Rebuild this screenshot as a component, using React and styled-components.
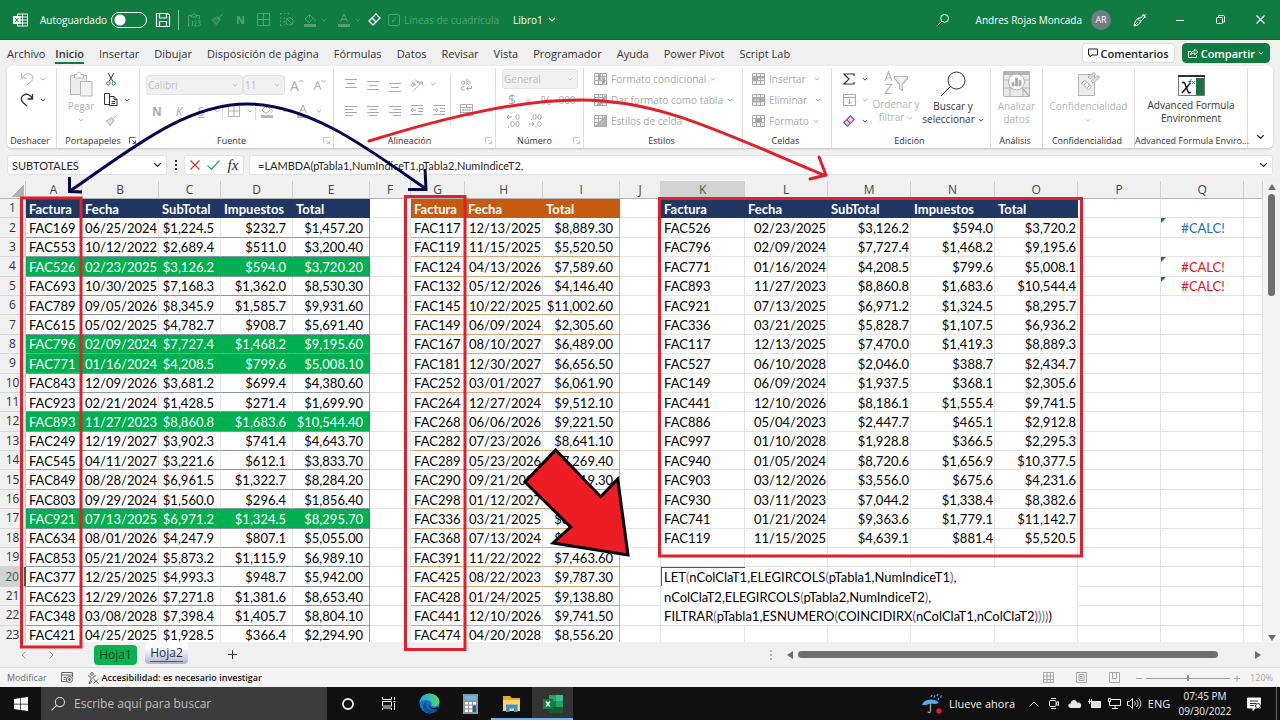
import React from "react";
import styled, { createGlobalStyle } from "styled-components";

const UI = '"Open Sans", "Noto Sans", sans-serif';
const CELL = 'Lato, "Open Sans", sans-serif';

const Global = createGlobalStyle`
  * { box-sizing: border-box; }
  html, body { margin: 0; padding: 0; }
  body { font-family: ${UI}; font-size: 11px; color: #262626; background: #f0f0f0; overflow: hidden; }
  button, input, select { font: inherit; color: inherit; margin: 0; padding: 0; border: 0; background: none; outline: none; }
  button { cursor: pointer; }
`;

/* ---------- icons ---------- */

const Svg = styled.svg`
  display: block;
  flex: none;
  overflow: visible;
`;

function Icon({ w = 16, h = w, box, children, ...rest }) {
  return (
    <Svg
      width={w}
      height={h}
      viewBox={box || `0 0 ${w} ${h}`}
      fill="none"
      stroke="currentColor"
      strokeWidth="1"
      aria-hidden="true"
      {...rest}
    >
      {children}
    </Svg>
  );
}

const Chevron = ({ w = 6 }) => (
  <Icon w={w} h={w / 2 + 1} box="0 0 8 5">
    <path d="M1 1l3 3 3-3" strokeWidth="1.2" />
  </Icon>
);

const Undo = () => (
  <Icon w={14} h={14}>
    <path d="M1.500 1v5h5M1.500 6C5 1.500 9 .5 11.500 3s1.500 5-.5 6.500L7 13" />
  </Icon>
);
const Redo = () => (
  <Icon w={14} h={14}>
    <path d="M12.500 1v5h-5M12.500 6C11 1.500 6 0 3 2.500S1.500 8 3 9.500L7 13" strokeWidth="1.3" />
  </Icon>
);
const Paste = () => (
  <Icon w={24} h={26}>
    <path d="M1.500 4.500h16v19h-16z" fill="#ececec" />
    <path d="M5.500 7V3.500h2.500C8 .5 12 .5 12 3.500h2.500V7z" fill="#fff" />
    <path d="M11.500 10.500h11.500v14.500H11.500z" fill="#f3f3f3" />
  </Icon>
);
const Scissors = () => (
  <Icon w={10} h={14}>
    <path d="M2 1l5 8.500M8 1L3 9.500" />
    <circle cx="2.300" cy="11.300" r="1.700" stroke="#2b88c8" />
    <circle cx="7.700" cy="11.300" r="1.700" stroke="#2b88c8" />
  </Icon>
);
const Copy = () => (
  <Icon w={14} h={13}>
    <path d="M.5.5h5v11h-5zM5.500 3.500h4.500l3 3v6h-7.500zM10 3.500v3h3M7.500 8.500h3.500M7.500 10.500h3.500" fill="#fff" />
  </Icon>
);
const Brush = ({ w = 14 }) => (
  <Icon w={w} box="0 0 14 14">
    <path d="M13 1L9 4.500M7 3.500l3.500 3.500M6 4.500L1 8c1.500.5 2 1 2.500 1.500l2 3 4-5z" fill="currentColor" fillOpacity=".35" />
  </Icon>
);
const Borders = ({ w = 13 }) => (
  <Icon w={w} box="0 0 13 13">
    <path d="M.5.500h12v12H.5zM6.500.5v12M.5 6.500h12" />
  </Icon>
);
const Bucket = ({ bar }) => (
  <Icon w={14} h={14}>
    <path d="M6.500 1.500L2 6l4 3.500 4.500-4zM6.500 1.500v3M11.500 5.500c1 1.500 1 3 0 3" />
    <path d="M1 11h12v3H1z" fill={bar} stroke="none" />
  </Icon>
);
const LetterA = ({ bar }) => (
  <Icon w={14} h={14}>
    <path d="M3.500 9L7 1l3.500 8M4.800 6.200h4.400" />
    <path d="M1 11h12v3H1z" fill={bar} stroke="none" />
  </Icon>
);
const Eraser = ({ w = 13, fill = "none", color = "currentColor" }) => (
  <Icon w={w} box="0 0 13 13" strokeWidth="1.300" stroke={color}>
    <path d="M8 1l4 4-7 7-4-4z" fill={fill} />
    <path d="M4 5l4 4" />
  </Icon>
);
const Align = ({ lines, step = 3, top = 1 }) => (
  <Icon w={12} h={11}>
    {lines.map(([x, len], i) => (
      <path key={i} d={`M${x} ${i * step + top + 0.5}h${len}`} />
    ))}
  </Icon>
);
const Indent = ({ right }) => (
  <Icon w={12} h={11}>
    <path d="M0 .5h12M7 3.500h5M7 6.500h5M0 9.500h12" />
    <path d={right ? "M0 5h5M3 3l2 2-2 2" : "M5 5H0M2 3L0 5l2 2"} />
  </Icon>
);
const Sigma = () => (
  <Icon w={12} h={12}>
    <path d="M11 3V1H1l5 5-5 5h10V9" strokeWidth="1.200" />
  </Icon>
);
const FillDown = () => (
  <Icon w={13} h={12}>
    <path d="M.5.500h12v11H.5zM.5 3.500h12M6.500 5v5M4.500 8l2 2 2-2" />
  </Icon>
);
const SortFilter = () => (
  <Icon w={24} h={24}>
    <path d="M1 10L4.500 1 8 10M2.200 7h4.600M1.500 13.500h6L1 22.500h7" strokeWidth="1.200" />
    <path d="M10.500 5.500h13v2l-5 5.500v6.500l-3-2V13l-5-5.500z" fill="#f0f0f0" strokeWidth="1.200" />
  </Icon>
);
const Lens = ({ w = 26, flat }) => (
  <Icon w={w} box="0 0 26 26" strokeWidth={flat ? 2 : 1}>
    <circle cx="16.500" cy="9.500" r="8.500" fill={flat ? "none" : "#fbfbfb"} />
    <path d="M10.500 15.500L1 25" />
  </Icon>
);
const Analyze = () => (
  <Icon w={27} h={26}>
    <path d="M.500.500h26v25H.500z" fill="#e9e9e9" />
    <path d="M.5 2.500h26" strokeWidth="3" />
    <path d="M.500 9h26M.500 17h26M7 4v22M20 18v8" />
    <circle cx="13.500" cy="11" r="8" fill="#fff" />
    <path d="M9 11.500h2V15H9zM12.500 7h2v8h-2zM16 9.500h2V15h-2z" fill="#a8a8a8" />
    <path d="M19.500 17l6.500 8" strokeWidth="1.500" />
  </Icon>
);
const Sensitivity = () => (
  <Icon w={24} h={26}>
    <path d="M1.500 3.500h16v21h-16z" fill="#ececec" />
    <path d="M4.500 12l3-3 7 7-3 3zM8 9l-3.500 3.500M10 11l-3 3M13 14l-3 3" fill="#fff" />
    <path d="M11 6l5-4c2-1 3 1 2 2l-5 4zM14 10l6-5c2-1 3 1 2 2l-6 5z" fill="#ddd" />
  </Icon>
);
const Afe = () => (
  <Icon w={27} h={21}>
    <path d="M.500.500h26v20H.500z" fill="#fff" stroke="#777" />
    <path d="M0 1h27" stroke="#3a2a33" strokeWidth="2" />
    <path d="M18 3h8v17h-8z" fill="#1e7145" stroke="none" />
    <path d="M4 8c3-2 3 1 4.500 5s2 6 4.500 4M12.500 8L4 18" stroke="#111" strokeWidth="1.500" />
    <path d="M10.500 10c2 0 1-6 3-6M10.500 6.500h3M14 6l3 3M17 6l-3 3" stroke="#1e7145" />
  </Icon>
);
const TableIcon = ({ kind }) => (
  <Icon w={13} h={12}>
    <path d="M.5.500h12v11H.5z" fill="#f0f0f0" />
    <path d="M.5 3.500h12M.5 7.500h12M4.500.5v11M8.500.5v11" />
    {kind === "cond" && <path d="M4.500 1.500h2v6h-2zM8.500 5h2v5h-2z" fill="#a0a0a0" />}
    {kind === "table" && <path d="M12 2L6 10l-3 1" strokeWidth="2.500" />}
    {kind === "style" && <path d="M2 11L12 1v10z" fill="#b8b8b8" strokeWidth="1.300" />}
    {kind === "insert" && <path d="M5 4.500h7M1 6h5M3 4L1 6l2 2" strokeWidth="2" />}
    {kind === "delete" && <path d="M1 4.500h7v3H1zM9 4l4 4M13 4L9 8" strokeWidth="1.800" />}
    {kind === "format" && <path d="M3.500 3.500h6v4h-6z" fill="#a0a0a0" />}
  </Icon>
);
const Wrap = () => (
  <Icon w={12} h={13}>
    <path d="M4.500 3v3.500M4.500 4.700a1.600 1.700 0 1 0 0 .2M7 .5v6M7 4.700a1.600 1.700 0 1 0 0-.2M4.500 9c-2-1-4 .5-3.500 2s2.500 1.500 3.500.5M11.500 8v2.500H6.500M8.500 8.500l-2 2 2 2" />
  </Icon>
);
const Merge = () => (
  <Icon w={13} h={12}>
    <path d="M.5.500h12v11H.5zM.5 3.500h12M.5 8.500h12M6.500.5v3M6.500 8.500v3M2.500 6h8M4 4.800L2.500 6 4 7.200M9 4.800L10.500 6 9 7.200" />
  </Icon>
);
const Orient = () => (
  <Icon w={14} h={13}>
    <path d="M2 5.500c2-2 4 0 2 2s-4 0-2-2l4 2M5 1.500l4.500 4.500M7 4c2-1.500 3.500.5 2 2M3.500 12.500l9-8.500M9.500 4h3v3" />
  </Icon>
);
const Launcher = () => (
  <Icon w={7} h={7}>
    <path d="M.5 6.500v-6h6M3 3l3.500 3.500M6.500 3.500v3h-3" strokeWidth=".9" />
  </Icon>
);

/* ---------- shell ---------- */

const Page = styled.div`
  position: relative;
  display: flex;
  flex-direction: column;
  height: 100vh;
  min-width: 1200px;
`;

const Row = styled.div`
  display: flex;
  align-items: center;
  gap: ${(p) => p.$gap || 0}px;
`;

const TitleBar = styled.header`
  display: flex;
  align-items: center;
  flex: none;
  height: 40px;
  padding-left: 13px;
  background: #107c41;
  border-bottom: 1px solid #0b6a36;
  color: #fff;
  font-size: 10px;
`;

const AutoSave = styled.label`
  display: flex;
  align-items: center;
  gap: 4px;
  margin: 0 9px 0 12px;
`;

const Toggle = styled.input.attrs({ type: "checkbox" })`
  appearance: none;
  width: 36px;
  height: 16px;
  border: 1px solid #fff;
  border-radius: 8px;
  background: radial-gradient(circle at 8px 7px, #fff 5px, transparent 6px);
`;

const TitleDivider = styled.span`
  width: 1px;
  height: 20px;
  margin: 0 4px 0 8px;
  background: #8cc3a3;
`;

const TitleButton = styled.button`
  display: flex;
  align-items: center;
  justify-content: center;
  gap: ${(p) => p.$gap || 0}px;
  width: ${(p) => p.$w || 23}px;
  height: 24px;
  color: ${(p) => (p.disabled ? "#4fa477" : "#fff")};
  font-size: 11px;
  font-weight: ${(p) => (p.$bold ? 700 : 400)};
`;

const GridLinesToggle = styled.label`
  display: flex;
  align-items: center;
  gap: 4px;
  margin: 0 14px 0 4px;
  color: #4fa477;
`;

const TickBox = styled.input.attrs({ type: "checkbox" })`
  appearance: none;
  display: grid;
  place-items: center;
  width: 12px;
  height: 12px;
  border: 1px solid #4fa477;
  border-radius: 2px;

  &:checked::before {
    content: "✓";
    font-family: "DejaVu Sans", sans-serif;
    font-size: 9px;
    line-height: 10px;
  }
`;

const TitleRight = styled.div`
  display: flex;
  align-items: center;
  margin-left: auto;
`;

const Avatar = styled.span`
  display: grid;
  place-items: center;
  width: 20px;
  height: 20px;
  margin: 0 9px;
  border-radius: 50%;
  background: #6f7d86;
  font-size: 9px;
`;

const UserName = styled.span`
  margin-left: 21px;
`;

const MenuBar = styled.nav`
  display: flex;
  align-items: center;
  flex: none;
  height: 26px;
  padding: 0 10px 0 7px;
  gap: 15px;
  font-size: 11px;
`;

const MenuTab = styled.a`
  padding-top: 3px;
  line-height: 16px;
  color: #333;
  text-decoration: none;
  white-space: nowrap;
  border-bottom: 2px solid ${(p) => (p.$active ? "#107c41" : "transparent")};
  font-weight: ${(p) => (p.$active ? 600 : 400)};

  &:first-child {
    margin-right: -5px;
  }
`;

const PillButton = styled.button`
  display: flex;
  align-items: center;
  gap: 3px;
  height: 20px;
  padding: 0 5px;
  border: 1px solid ${(p) => (p.$primary ? "#107c41" : "#dcdcdc")};
  border-radius: 4px;
  background: ${(p) => (p.$primary ? "#107c41" : "#fff")};
  color: ${(p) => (p.$primary ? "#fff" : "#222")};
  font-size: 11px;
  font-weight: 600;
`;

const Pills = styled.div`
  display: flex;
  gap: 7px;
  margin-left: auto;
`;

/* ---------- ribbon ---------- */

const Ribbon = styled.section`
  display: flex;
  flex: none;
  height: 82px;
  margin: 0 7px;
  border-radius: 5px;
  background: #fff;
  box-shadow: 0 1px 2px rgba(0, 0, 0, 0.2);
`;

const Group = styled.div`
  display: flex;
  flex-direction: column;
  flex: none;
  width: ${(p) => p.$w}px;
  padding-top: 2px;
`;

const GroupMain = styled.div`
  display: flex;
  flex: 1;
  border-right: 1px solid #dedede;
  color: ${(p) => (p.$live ? "#333" : "#aaa")};
  padding-left: ${(p) => p.$pad || 0}px;
  font-size: 10px;
`;

const GroupLabel = styled.div`
  display: flex;
  align-items: center;
  height: 16px;
  padding-right: 3px;
  border-right: 1px solid #dedede;
  font-size: 9px;
  color: #333;
  white-space: nowrap;

  span {
    flex: 1;
    text-align: center;
  }
  svg {
    color: ${(p) => (p.$dim ? "#c4c4c4" : "#555")};
  }
`;

const Stack = styled.div`
  display: flex;
  flex-direction: column;
  padding-top: ${(p) => p.$top || 0}px;
  gap: ${(p) => p.$gap || 0}px;
`;

const ToolRow = styled.div`
  display: flex;
  align-items: center;
  height: ${(p) => p.$h || 21}px;
  color: ${(p) => (p.$dim ? "#aaa" : "inherit")};
`;

const Tool = styled.button`
  display: flex;
  align-items: center;
  justify-content: center;
  width: ${(p) => p.$w || 22}px;
  height: 20px;
  font-size: ${(p) => p.$size || 12}px;
  font-weight: ${(p) => (p.$bold ? 700 : 400)};
  font-style: ${(p) => (p.$italic ? "italic" : "normal")};
  text-decoration: ${(p) => (p.$underline ? "underline" : "none")};
`;

const VLine = styled.span`
  width: 1px;
  height: ${(p) => p.$h || 18}px;
  background: #dedede;
`;

const TextTool = styled.button`
  display: flex;
  align-items: center;
  gap: 4px;
  height: 21px;
  white-space: nowrap;

  svg:last-child {
    margin-left: ${(p) => p.$push || 0}px;
  }
`;

const BigTool = styled.button`
  display: flex;
  flex-direction: column;
  align-items: center;
  width: ${(p) => p.$w}px;
  padding-top: ${(p) => p.$top || 3}px;
  color: ${(p) => (p.$live ? "#333" : "#b4b4b4")};
  font-size: 10px;
  line-height: 13px;
  text-align: center;

  > span {
    display: flex;
    flex-direction: column;
    align-items: center;
    margin-top: 3px;
    white-space: nowrap;
  }
  em {
    display: flex;
    align-items: center;
    gap: 3px;
    height: 13px;
    font-style: normal;
  }
`;

const PickerFrame = styled.label`
  position: relative;
  display: flex;
  align-items: center;
  width: ${(p) => p.$w}px;
  height: 20px;
  border: 1px solid #e2e2e2;
  border-radius: 3px;
  background: #f1f1f1;
  color: #bdbdbd;

  select {
    appearance: none;
    width: 100%;
    padding-left: 1px;
    opacity: 1;
  }
  svg {
    position: absolute;
    right: 4px;
  }
`;

function Picker({ w, value, label }) {
  return (
    <PickerFrame $w={w}>
      <select disabled aria-label={label} defaultValue={value}>
        <option>{value}</option>
      </select>
      <Chevron />
    </PickerFrame>
  );
}

function RibbonGroup({ w, label, live, pad, launcher, dim, children }) {
  return (
    <Group $w={w}>
      <GroupMain $live={live} $pad={pad}>
        {children}
      </GroupMain>
      <GroupLabel $dim={dim}>
        <span>{label}</span>
        {launcher && <Launcher />}
      </GroupLabel>
    </Group>
  );
}

const CollapseButton = styled.button`
  display: flex;
  align-items: flex-end;
  justify-content: center;
  width: 26px;
  padding-bottom: 9px;
`;

/* ---------- formula bar ---------- */

const FormulaBar = styled.section`
  display: flex;
  align-items: center;
  flex: none;
  height: 20px;
  margin: 7px 7px 6px;
  font-family: ${CELL};
  font-size: 11px;
`;

const Field = styled.div`
  display: flex;
  align-items: center;
  flex: ${(p) => (p.$grow ? 1 : "none")};
  width: ${(p) => (p.$w ? `${p.$w}px` : "auto")};
  height: 20px;
  margin-left: ${(p) => (p.$grow ? 5 : 0)}px;
  padding: 0 ${(p) => (p.$tight ? 0 : 4)}px 0 ${(p) => (p.$tight ? 0 : p.$grow ? 8 : 4)}px;
  border: 1px solid #e2e2e2;
  border-radius: 3px;
  background: #fff;

  input {
    flex: 1;
    min-width: 0;
  }
`;

const Dots = styled.span`
  display: flex;
  flex-direction: column;
  align-items: center;
  gap: 2px;
  width: ${(p) => p.$w || 17}px;

  &::before,
  &::after,
  i {
    content: "";
    width: 2px;
    height: 2px;
    background: ${(p) => p.$color || "#333"};
  }
`;

const Fx = styled.button`
  width: 20px;
  font-family: "Liberation Serif", serif;
  font-size: 15px;
  font-style: italic;
`;

/* ---------- grid ---------- */

const SheetArea = styled.main`
  display: flex;
  flex: 1;
  min-height: 0;
  overflow: hidden;
  background: #fff;
`;

/* The last row runs slightly under the sheet tabs. */
const Grid = styled.table`
  flex: 1;
  min-width: 0;
  height: calc(100% + 3px);
  table-layout: fixed;
  border-collapse: separate;
  border-spacing: 0;
  font-family: ${CELL};
  font-size: 13px;
  line-height: 16px;
  color: #000;
`;

const HeadRow = styled.tr`
  height: 18px;
`;

const ColHead = styled.th`
  padding: 0;
  border-right: 1px solid #d0d0d0;
  border-bottom: 1px solid #b4b4b4;
  background: ${(p) => (p.$on ? "#d2d2d2" : "#f0f0f0")};
  color: ${(p) => (p.$on ? "#1e6b41" : "#444")};
  font-family: ${UI};
  font-size: 12px;
  font-weight: 400;
`;

const Corner = styled.th`
  padding: 0;
  border-right: 1px solid #c8c8c8;
  border-bottom: 1px solid #b4b4b4;
  background: linear-gradient(135deg, transparent 50%, #b0b0b0 50%) 11px 4px / 13px 12px no-repeat #f0f0f0;
`;

const RowHead = styled.th`
  padding: 0;
  border-right: ${(p) => (p.$on ? "2px solid #217346" : "1px solid #c8c8c8")};
  border-bottom: 1px solid #d6d6d6;
  background: ${(p) => (p.$on ? "#d2d2d2" : "#f0f0f0")};
  color: ${(p) => (p.$on ? "#1e6b41" : "#333")};
  font-family: ${UI};
  font-size: 12px;
  font-weight: 400;
`;

const lineColor = { blue: "#8596ad", orange: "#d8a679", none: "#e3e3e3" };

const Cell = styled.td`
  position: relative;
  padding: 1px ${(p) => (p.$wide ? 6 : 1)}px 0 3px;
  border-right: 1px solid
    ${(p) => (p.$fill ? p.$fill : p.$edge ? lineColor[p.$line] : "#e3e3e3")};
  border-bottom: 1px solid ${(p) => (p.$fill && !p.$body ? p.$fill : lineColor[p.$line || "none"])};
  background: ${(p) => p.$fill || "#fff"};
  color: ${(p) => p.$color || (p.$fill ? "#fff" : "#000")};
  font-weight: ${(p) => (p.$head ? 700 : 400)};
  text-align: ${(p) => p.$align || "left"};
  white-space: nowrap;
`;

const ErrorFlag = styled.span`
  position: absolute;
  top: 0;
  left: 0;
  border-top: 5px solid #1a7a2e;
  border-right: 5px solid transparent;
`;

const FormulaCell = styled.td`
  padding: 1px 0 0 3px;
  border-right: 1px solid #e3e3e3;
  border-bottom: 1px solid ${(p) => (p.$last ? "#e3e3e3" : "#fff")};
  background: ${(p) =>
    p.$first
      ? `linear-gradient(#217346, #217346) 0 0 / 84px 1px no-repeat,
         linear-gradient(#217346, #217346) 0 0 / 1px 100% no-repeat, #fff`
      : "#fff"};
  white-space: nowrap;
`;

const Paren = styled.span`
  color: ${(p) => p.$c};
`;

const VScroll = styled.div`
  display: flex;
  flex-direction: column;
  align-items: center;
  flex: none;
  width: 17px;
  padding: 3px 0 1px;
  background: #f3f3f3;
`;

const VThumb = styled.div`
  width: 7px;
  height: 102px;
  margin: 2px 0 auto;
  border-radius: 4px;
  background: #6e6e6e;
`;

const Arrow = ({ d }) => (
  <Icon w={8} h={8} stroke="none" fill="#6e6e6e">
    <path d={d} />
  </Icon>
);

const invoices = `FAC169 06/25/2024 $1,224.5 $232.7 $1,457.20
FAC553 10/12/2022 $2,689.4 $511.0 $3,200.40
FAC526 02/23/2025 $3,126.2 $594.0 $3,720.20
FAC693 10/30/2025 $7,168.3 $1,362.0 $8,530.30
FAC789 09/05/2026 $8,345.9 $1,585.7 $9,931.60
FAC615 05/02/2025 $4,782.7 $908.7 $5,691.40
FAC796 02/09/2024 $7,727.4 $1,468.2 $9,195.60
FAC771 01/16/2024 $4,208.5 $799.6 $5,008.10
FAC843 12/09/2026 $3,681.2 $699.4 $4,380.60
FAC923 02/21/2024 $1,428.5 $271.4 $1,699.90
FAC893 11/27/2023 $8,860.8 $1,683.6 $10,544.40
FAC249 12/19/2027 $3,902.3 $741.4 $4,643.70
FAC545 04/11/2027 $3,221.6 $612.1 $3,833.70
FAC849 08/28/2024 $6,961.5 $1,322.7 $8,284.20
FAC803 09/29/2024 $1,560.0 $296.4 $1,856.40
FAC921 07/13/2025 $6,971.2 $1,324.5 $8,295.70
FAC634 08/01/2026 $4,247.9 $807.1 $5,055.00
FAC853 05/21/2024 $5,873.2 $1,115.9 $6,989.10
FAC377 12/25/2025 $4,993.3 $948.7 $5,942.00
FAC623 12/29/2026 $7,271.8 $1,381.6 $8,653.40
FAC348 03/08/2028 $7,398.4 $1,405.7 $8,804.10
FAC421 04/25/2025 $1,928.5 $366.4 $2,294.90`.split("\n").map((r) => r.split(" "));

const payments = `FAC117 12/13/2025 $8,889.30
FAC119 11/15/2025 $5,520.50
FAC124 04/13/2026 $7,589.60
FAC132 05/12/2026 $4,146.40
FAC145 10/22/2025 $11,002.60
FAC149 06/09/2024 $2,305.60
FAC167 08/10/2027 $6,489.00
FAC181 12/30/2027 $6,656.50
FAC252 03/01/2027 $6,061.90
FAC264 12/27/2024 $9,512.10
FAC268 06/06/2026 $9,221.50
FAC282 07/23/2026 $8,641.10
FAC289 05/23/2026 $7,269.40
FAC290 09/21/2025 $8,419.30
FAC298 01/12/2027 $6,318.20
FAC336 03/21/2025 $8,295.70
FAC368 07/13/2024 $5,214.60
FAC391 11/22/2022 $7,463.60
FAC425 08/22/2023 $9,787.30
FAC428 01/24/2025 $9,138.80
FAC441 12/10/2026 $9,741.50
FAC474 04/20/2028 $8,556.20`.split("\n").map((r) => r.split(" "));

const result = `FAC526 02/23/2025 $3,126.2 $594.0 $3,720.2
FAC796 02/09/2024 $7,727.4 $1,468.2 $9,195.6
FAC771 01/16/2024 $4,208.5 $799.6 $5,008.1
FAC893 11/27/2023 $8,860.8 $1,683.6 $10,544.4
FAC921 07/13/2025 $6,971.2 $1,324.5 $8,295.7
FAC336 03/21/2025 $5,828.7 $1,107.5 $6,936.2
FAC117 12/13/2025 $7,470.0 $1,419.3 $8,889.3
FAC527 06/10/2028 $2,046.0 $388.7 $2,434.7
FAC149 06/09/2024 $1,937.5 $368.1 $2,305.6
FAC441 12/10/2026 $8,186.1 $1,555.4 $9,741.5
FAC886 05/04/2023 $2,447.7 $465.1 $2,912.8
FAC997 01/10/2028 $1,928.8 $366.5 $2,295.3
FAC940 01/05/2024 $8,720.6 $1,656.9 $10,377.5
FAC903 03/12/2026 $3,556.0 $675.6 $4,231.6
FAC930 03/11/2023 $7,044.2 $1,338.4 $8,382.6
FAC741 01/21/2024 $9,363.6 $1,779.1 $11,142.7
FAC119 11/15/2025 $4,639.1 $881.4 $5,520.5`.split("\n").map((r) => r.split(" "));

const highlighted = [4, 8, 9, 12, 17];
const errors = { 2: "#1a6fc0", 4: "#e01212", 5: "#e01212" };
const columns = [
  ["A", 56], ["B", 77], ["C", 62], ["D", 72], ["E", 77], ["F", 41],
  ["G", 54], ["H", 78], ["I", 77], ["J", 41], ["K", 84], ["L", 83],
  ["M", 83], ["N", 84], ["O", 83], ["P", 83], ["Q", 83], ["", null],
];

const formula = {
  20: ["LET", ["(", "#c0504d"], "nColClaT1,ELEGIRCOLS", ["(", "#7f5fa8"], "pTabla1,NumIndiceT1", [")", "#7f5fa8"], ","],
  21: ["nColClaT2,ELEGIRCOLS", ["(", "#7f5fa8"], "pTabla2,NumIndiceT2", [")", "#7f5fa8"], ","],
  22: ["FILTRAR", ["(", "#7f5fa8"], "pTabla1,ESNUMERO", ["(", "#2e8b2e"], "COINCIDIRX", ["(", "#c0148c"],
    "nColClaT1,nColClaT2", [")", "#c0148c"], [")", "#2e8b2e"], [")", "#7f5fa8"], [")", "#c0504d"], ")"],
};

const five = ["Factura", "Fecha", "SubTotal", "Impuestos", "Total"];
const three = ["Factura", "Fecha", "Total"];

function SheetRow({ n }) {
  const head = n === 1;
  const a = head ? five : invoices[n - 2];
  const g = head ? three : payments[n - 2];
  const k = head ? five : result[n - 2];
  const aFill = head ? "#203764" : highlighted.includes(n) ? "#00b050" : undefined;
  const gFill = head ? "#c55a11" : undefined;
  return (
    <tr>
      <RowHead scope="row" $on={n === 20}>{n}</RowHead>
      {a.map((v, i) => (
        <Cell key={i} $fill={aFill} $body={!head} $line="blue" $edge={i === 4} $head={head}
          $align={head || i === 0 ? "left" : "right"} $wide={!head && i > 1}>
          {v}
        </Cell>
      ))}
      <Cell />
      {g.map((v, i) => (
        <Cell key={i} $fill={gFill} $body={!head} $line="orange" $edge={i === 2} $head={head}
          $align={head || i === 0 ? "left" : "right"} $wide={!head && i === 2}>
          {v}
        </Cell>
      ))}
      <Cell />
      {formula[n] ? (
        <FormulaCell colSpan={5} $first={n === 20} $last={n === 22}>
          {formula[n].map((part, j) =>
            Array.isArray(part) ? <Paren key={j} $c={part[1]}>{part[0]}</Paren> : part
          )}
        </FormulaCell>
      ) : (
        five.map((_, i) => (
          <Cell key={i} $fill={head ? "#203764" : undefined} $head={head}
            $align={head || i === 0 ? "left" : "right"}>
            {k && k[i]}
          </Cell>
        ))
      )}
      <Cell />
      <Cell $align="center" $color={errors[n]}>
        {errors[n] && <><ErrorFlag />#CALC!</>}
      </Cell>
      <Cell />
    </tr>
  );
}

/* ---------- sheet tabs and status ---------- */

const TabsBar = styled.section`
  display: flex;
  align-items: center;
  flex: none;
  height: 26px;
  padding: 0 18px 0 9px;
  border-bottom: 1px solid #dcdcdc;
  font-size: 12px;
  color: #999;
`;

const NavButton = styled.button`
  display: grid;
  place-items: center;
  width: 28px;
  height: 20px;
  font-size: 14px;
`;

const SheetTab = styled.button`
  align-self: ${(p) => (p.$active ? "flex-start" : "center")};
  height: ${(p) => (p.$active ? 22 : 20)}px;
  width: 43px;
  border-radius: 4px;
  margin-left: ${(p) => (p.$active ? 8 : 29)}px;
  background: ${(p) => (p.$active ? "linear-gradient(#fdfdff 30%, #aab2c8)" : "#0bb050")};
  color: ${(p) => (p.$active ? "#222b48" : "#0b3f1e")};

  span {
    display: inline-block;
    line-height: 16px;
    border-bottom: ${(p) => (p.$active ? "1px solid #217346" : "0")};
  }
`;

const AddButton = styled.button`
  width: 20px;
  margin-left: 34px;
  color: #333;
  display: grid;
  place-items: center;
`;

const HScroll = styled.div`
  display: flex;
  align-items: center;
  gap: 4px;
  width: 502px;
  margin-left: auto;
`;

const HTrack = styled.div`
  flex: 1;
`;

const HThumb = styled.div`
  width: 93%;
  height: 7px;
  border-radius: 4px;
  background: #6e6e6e;
`;

const StatusBar = styled.footer`
  display: flex;
  align-items: center;
  flex: none;
  height: 19px;
  padding: 0 7px;
  background: #f4f4f4;
  font-size: 9px;
  color: #666;

  strong {
    margin-left: 3px;
    font-weight: 600;
    color: #111;
  }
`;

const StatusRight = styled.div`
  display: flex;
  align-items: center;
  margin-left: auto;
  color: #a5a5a5;
`;

const ViewButton = styled.button`
  display: grid;
  place-items: center;
  width: ${(p) => p.$w || 33}px;
`;

const ZoomValue = styled.output`
  margin-left: 6px;
`;

const Zoom = styled.input.attrs({ type: "range" })`
  appearance: none;
  width: 84px;
  height: 8px;
  background: linear-gradient(#9a9a9a, #9a9a9a) 0 4px / 100% 1px no-repeat;

  &::-webkit-slider-thumb {
    appearance: none;
    width: 2px;
    height: 6px;
    background: #8a8a8a;
  }
`;

/* ---------- taskbar ---------- */

const Taskbar = styled.footer`
  display: flex;
  align-items: stretch;
  flex: none;
  height: 33px;
  background: #101010;
  color: #eee;
`;

const TaskButton = styled.button`
  display: grid;
  place-items: center;
  width: 41px;
  background: ${(p) => (p.$active ? "#333" : "none")};
  box-shadow: ${(p) => (p.$open ? "inset 0 -2px #76b0e8" : "none")};
`;

const SearchBox = styled.label`
  display: flex;
  align-items: center;
  gap: 9px;
  width: 286px;
  padding-left: 10px;
  background: #3c3c3c;
  font-size: 12px;
  color: #d8d8d8;

  input {
    flex: 1;
  }
  input::placeholder {
    color: #c0c0c0;
    opacity: 1;
  }
`;

const Tray = styled.div`
  display: flex;
  align-items: center;
  margin-left: auto;
  font-size: 11px;
`;

const TrayButton = styled.button`
  display: grid;
  place-items: center;
  width: ${(p) => p.$w || 20}px;
  height: 33px;
`;

const Weather = styled.button`
  display: flex;
  align-items: center;
  gap: 7px;
  margin-right: 9px;
  font-size: 11px;
`;

const Clock = styled.time`
  width: 62px;
  margin-right: 8px;
  line-height: 15px;
  font-size: 10px;
  text-align: center;
`;

const ShowDesktop = styled.button`
  width: 4px;
  height: 33px;
  margin-left: 12px;
  border-left: 1px solid #666;
`;

const Annotations = styled.svg`
  position: absolute;
  top: 0;
  left: 0;
  width: 1280px;
  height: 720px;
  pointer-events: none;
`;

const menu = ["Archivo", "Inicio", "Insertar", "Dibujar", "Disposición de página", "Fórmulas", "Datos",
  "Revisar", "Vista", "Programador", "Ayuda", "Power Pivot", "Script Lab"];

function Title() {
  return (
    <TitleBar>
      <Icon w={15} h={14}>
        <path d="M4.500 1h10v12h-10zM4.500 4h10M4.500 7h10M4.500 10h10M9.500 1v12" />
        <path d="M0 3h7.500v8H0z" fill="#fff" stroke="none" />
        <path d="M2 5l3.500 4M5.500 5L2 9" stroke="#107c41" />
      </Icon>
      <AutoSave>
        Autoguardado
        <Toggle />
      </AutoSave>
      <TitleButton $w={14} aria-label="Guardar">
        <Icon w={14} h={14}><path d="M.5.500h11l2 1.500v11.500H.5zM3.500.5v4.500h7V.5M3.500 13.500v-5h7v5" strokeWidth="1.200" /></Icon>
      </TitleButton>
      <TitleDivider />
      <TitleButton disabled aria-label="Pegar valores">
        <Icon w={13} h={14}>
          <path d="M2 13H.5V2.500H3M9 2.500h2.500V6M3.500 4V2h1.500c0-2 2-2 2 0h1.500v2zM4.500 8v5M6.500 8.500c2-1 2.500.5 0 4.500h2.500M10 8h2.500l-1.500 2c2 0 2 3-1 3" />
        </Icon>
      </TitleButton>
      <TitleButton disabled aria-label="Copiar formato"><Brush w={13} /></TitleButton>
      <TitleButton disabled $bold>N</TitleButton>
      <TitleButton disabled aria-label="Bordes"><Borders /></TitleButton>
      <TitleButton disabled aria-label="Sin bordes">
        <Icon w={14} h={13}>
          <path d="M.5.500h10M.5.500v12M4.500 4.500v8M.5 12.500h3" strokeDasharray="1.500 2" />
          <circle cx="9.500" cy="8.500" r="3.700" />
          <path d="M7 6l5 5" />
        </Icon>
      </TitleButton>
      <TitleButton disabled $w={34} $gap={4} aria-label="Relleno"><Bucket bar="#4fa477" /><Chevron /></TitleButton>
      <TitleButton disabled $w={33} $gap={4} aria-label="Color"><LetterA bar="#4fa477" /><Chevron /></TitleButton>
      <TitleButton $w={19} aria-label="Borrar"><Eraser /></TitleButton>
      <GridLinesToggle>
        <TickBox disabled defaultChecked />
        Líneas de cuadrícula
      </GridLinesToggle>
      <Row $gap={5}>
        Libro1
        <Chevron w={8} />
      </Row>
      <TitleRight>
        <TitleButton aria-label="Buscar"><Lens w={12} flat /></TitleButton>
        <UserName>Andres Rojas Moncada</UserName>
        <Avatar>AR</Avatar>
        <TitleButton $w={40} aria-label="Lápiz">
          <Icon w={14} h={14}><path d="M1 13c0-3 2-6 4-8l3 0 2-3M1 13c3 0 6-2 7-5M5 5c0 2 1 3 3 3l3-3 1-3M2 12l3-3M10 1l1 2M13 4l-2 0M12.500 1L11 3" /></Icon>
        </TitleButton>
        <TitleButton $w={40} aria-label="Minimizar"><Icon w={8} h={8}><path d="M0 4.500h8" /></Icon></TitleButton>
        <TitleButton $w={40} aria-label="Restaurar">
          <Icon w={9} h={9}><rect x=".5" y="2.500" width="6" height="6" rx="1" /><path d="M2.500 2V.5H7c1 0 1.500.5 1.500 1.500V7H7" /></Icon>
        </TitleButton>
        <TitleButton $w={40} aria-label="Cerrar"><Icon w={9} h={9}><path d="M.5.500l8 8M8.500.500l-8 8" strokeWidth="1.200" /></Icon></TitleButton>
      </TitleRight>
    </TitleBar>
  );
}

const full = [[0, 12], [2, 8], [0, 12]];

function RibbonBar() {
  return (
    <Ribbon>
      <RibbonGroup w={50} label="Deshacer" live pad={9}>
        <Stack>
          <ToolRow $dim><Tool aria-label="Deshacer"><Undo /></Tool><Tool $w={10}><Chevron /></Tool></ToolRow>
          <ToolRow><Tool aria-label="Rehacer"><Redo /></Tool><Tool $w={10}><Chevron /></Tool></ToolRow>
        </Stack>
      </RibbonGroup>
      <RibbonGroup w={83} label="Portapapeles" live launcher pad={5}>
        <BigTool $w={38} disabled><Paste /><span>Pegar<em><Chevron /></em></span></BigTool>
        <Stack>
          <ToolRow><Tool aria-label="Cortar"><Scissors /></Tool></ToolRow>
          <ToolRow><Tool aria-label="Copiar"><Copy /></Tool><Tool $w={10}><Chevron /></Tool></ToolRow>
          <ToolRow $dim><Tool aria-label="Copiar formato"><Brush w={13} /></Tool></ToolRow>
        </Stack>
      </RibbonGroup>
      <RibbonGroup w={194} label="Fuente" launcher dim pad={6}>
        <Stack $top={7} $gap={6}>
          <ToolRow $h={20}>
            <Picker w={97} value="Calibri" label="Fuente" />
            <Picker w={42} value="11" label="Tamaño" />
            <Tool $w={24} $size={14}>A<Icon w={5} h={12}><path d="M.5 3l2-2 2 2" /></Icon></Tool>
            <Tool $size={12}>A<Icon w={5} h={12}><path d="M.5 1l2 2 2-2" /></Icon></Tool>
          </ToolRow>
          <ToolRow $h={20}>
            <Tool $bold>N</Tool>
            <Tool $italic>K</Tool>
            <Tool $underline>S</Tool>
            <Tool $w={10}><Chevron /></Tool>
            <VLine />
            <Tool aria-label="Bordes"><Borders w={12} /></Tool>
            <Tool $w={10}><Chevron /></Tool>
            <VLine />
            <Tool aria-label="Relleno"><Bucket bar="#b8b8b8" /></Tool>
            <Tool $w={14}><Chevron /></Tool>
            <Tool aria-label="Color"><LetterA bar="#b8b8b8" /></Tool>
            <Tool $w={10}><Chevron /></Tool>
          </ToolRow>
        </Stack>
      </RibbonGroup>
      <RibbonGroup w={162} label="Alineación" launcher dim pad={6}>
        <Stack $top={6} $gap={6}>
          <ToolRow $h={20}>
            <Tool><Align lines={full} step={4} top={0} /></Tool>
            <Tool><Align lines={full} step={4} top={2} /></Tool>
            <Tool><Align lines={full} step={4} top={4} /></Tool>
            <Tool><Orient /></Tool>
            <Tool $w={10}><Chevron /></Tool>
          </ToolRow>
          <ToolRow $h={20}>
            <Tool><Align lines={[[0, 12], [0, 8], [0, 12], [0, 8]]} /></Tool>
            <Tool><Align lines={[[0, 12], [2, 8], [0, 12], [2, 8]]} /></Tool>
            <Tool><Align lines={[[0, 12], [4, 8], [0, 12], [4, 8]]} /></Tool>
            <Tool><Indent /></Tool>
            <Tool><Indent right /></Tool>
          </ToolRow>
        </Stack>
        <Row><VLine $h={52} /></Row>
        <Stack $top={6} $gap={6}>
          <ToolRow $h={20}><Tool $w={30}><Wrap /></Tool></ToolRow>
          <ToolRow $h={20}><Tool $w={30}><Merge /></Tool></ToolRow>
        </Stack>
      </RibbonGroup>
      <RibbonGroup w={88} label="Número" launcher dim pad={6}>
        <Stack>
          <ToolRow><Picker w={76} value="General" label="Formato de número" /></ToolRow>
          <ToolRow>
            <Tool $w={20} $size={14}>$</Tool>
            <Tool $w={12}><Chevron /></Tool>
            <Tool $w={24} $size={13}>%</Tool>
            <Tool $w={18} $size={10}>000</Tool>
          </ToolRow>
          <ToolRow>
            <Tool $w={22}>
              <Icon w={13} h={13}><path d="M0 3h5M2 1L0 3l2 2" /><ellipse cx="10.500" cy="3" rx="1.700" ry="2.500" /><ellipse cx="5.500" cy="10" rx="1.700" ry="2.500" /><ellipse cx="10.500" cy="10" rx="1.700" ry="2.500" /><path d="M1.500 12v1.500M7 5v1" /></Icon>
            </Tool>
            <Tool $w={22}>
              <Icon w={13} h={13}><path d="M0 10h5M3 8l2 2-2 2M7 12v1.500M2.500 5v1" /><ellipse cx="10.500" cy="3" rx="1.700" ry="2.500" /><ellipse cx="5.500" cy="3" rx="1.700" ry="2.500" /><ellipse cx="10.500" cy="10" rx="1.700" ry="2.500" /></Icon>
            </Tool>
          </ToolRow>
        </Stack>
      </RibbonGroup>
      <RibbonGroup w={159} label="Estilos" pad={10}>
        <Stack>
          <TextTool><TableIcon kind="cond" />Formato condicional<Chevron /></TextTool>
          <TextTool><TableIcon kind="table" />Dar formato como tabla<Chevron /></TextTool>
          <TextTool><TableIcon kind="style" />Estilos de celda</TextTool>
        </Stack>
      </RibbonGroup>
      <RibbonGroup w={89} label="Celdas" pad={9}>
        <Stack>
          <TextTool $push={4}><TableIcon kind="insert" />Insertar<Chevron /></TextTool>
          <TextTool $push={4}><TableIcon kind="delete" />Eliminar<Chevron /></TextTool>
          <TextTool><TableIcon kind="format" />Formato<Chevron /></TextTool>
        </Stack>
      </RibbonGroup>
      <RibbonGroup w={159} label="Edición" live pad={5}>
        <Stack>
          <ToolRow><Tool $w={24} aria-label="Autosuma"><Sigma /></Tool><Tool $w={8}><Chevron /></Tool></ToolRow>
          <ToolRow $dim><Tool $w={24} aria-label="Rellenar"><FillDown /></Tool><Tool $w={8}><Chevron /></Tool></ToolRow>
          <ToolRow><Tool $w={24} aria-label="Borrar"><Eraser w={12} fill="#eed6f5" color="#8e44a8" /></Tool><Tool $w={8}><Chevron /></Tool></ToolRow>
        </Stack>
        <BigTool $w={54} disabled><SortFilter /><span>Ordenar y<em>filtrar<Chevron /></em></span></BigTool>
        <BigTool $w={60} $live><Lens /><span>Buscar y<em>seleccionar<Chevron /></em></span></BigTool>
      </RibbonGroup>
      <RibbonGroup w={52} label="Análisis">
        <BigTool $w={51} disabled><Analyze /><span>Analizar<em>datos</em></span></BigTool>
      </RibbonGroup>
      <RibbonGroup w={92} label="Confidencialidad">
        <BigTool $w={91} disabled><Sensitivity /><span>Confidencialidad<em><Chevron /></em></span></BigTool>
      </RibbonGroup>
      <RibbonGroup w={113} label="Advanced Formula Enviro...">
        <BigTool $w={112} $live $top={7}><Afe /><span>Advanced Formula<em>Environment</em></span></BigTool>
      </RibbonGroup>
      <CollapseButton aria-label="Contraer"><Chevron w={9} /></CollapseButton>
    </Ribbon>
  );
}

export default function App() {
  return (
    <Page>
      <Global />
      <Title />
      <MenuBar>
        {menu.map((m) => (
          <MenuTab key={m} href="#" $active={m === "Inicio"}>{m}</MenuTab>
        ))}
        <Pills>
          <PillButton>
            <Icon w={10} h={10}><path d="M.5 1h9v6H4L2 9V7H.5z" /></Icon>
            Comentarios
          </PillButton>
          <PillButton $primary>
            <Icon w={10} h={10}><path d="M3 3.500H.5v6h8V7M2.500 7c.5-3 2-4 4-4V1l3 3-3 3V5C5 5 3.500 5.500 2.500 7z" /></Icon>
            Compartir
            <Chevron />
          </PillButton>
        </Pills>
      </MenuBar>
      <RibbonBar />
      <FormulaBar>
        <Field $w={160}>
          <input aria-label="Cuadro de nombres" defaultValue="SUBTOTALES" />
          <Chevron w={9} />
        </Field>
        <Dots><i /></Dots>
        <Field $w={60} $tight>
          <Tool $w={19} aria-label="Cancelar"><Icon w={10} h={10}><path d="M.500.500l9 9M9.500.500l-9 9" stroke="#d13438" strokeWidth="1.200" /></Icon></Tool>
          <Tool $w={19} aria-label="Introducir"><Icon w={13} h={10}><path d="M.5 5.500l4 4 8-9" stroke="#2f9e4f" strokeWidth="1.200" /></Icon></Tool>
          <Fx>fx</Fx>
        </Field>
        <Field $grow>
          <input aria-label="Barra de fórmulas" defaultValue="=LAMBDA(pTabla1,NumIndiceT1,pTabla2,NumIndiceT2," />
          <Chevron w={9} />
        </Field>
      </FormulaBar>

      <SheetArea>
        <Grid>
          <colgroup>
            <col width="26" />
            {columns.map(([c, w], i) => (w ? <col key={i} width={w} /> : <col key={i} />))}
          </colgroup>
          <thead>
            <HeadRow>
              <Corner />
              {columns.map(([c], i) => (
                <ColHead key={i} scope="col" $on={c === "K"}>{c}</ColHead>
              ))}
            </HeadRow>
          </thead>
          <tbody>
            {Array.from({ length: 23 }, (_, i) => <SheetRow key={i} n={i + 1} />)}
          </tbody>
        </Grid>
        <VScroll>
          <Arrow d="M4 0l4 6H0z" />
          <VThumb />
          <Arrow d="M0 2h8L4 8z" />
        </VScroll>
      </SheetArea>

      <TabsBar>
        <NavButton aria-label="Anterior"><Icon w={5} h={8}><path d="M4.500.5L1 4l3.500 3.500" /></Icon></NavButton>
        <NavButton aria-label="Siguiente"><Icon w={5} h={8}><path d="M.5.500L4 4 .5 7.500" /></Icon></NavButton>
        <SheetTab><span>Hoja1</span></SheetTab>
        <SheetTab $active><span>Hoja2</span></SheetTab>
        <AddButton aria-label="Hoja nueva"><Icon w={9} h={9}><path d="M4.500 0v9M0 4.500h9" /></Icon></AddButton>
        <HScroll>
          <Dots $color="#b0b0b0" $w={22}><i /></Dots>
          <Arrow d="M7 0v8L1 4z" />
          <HTrack><HThumb /></HTrack>
          <Arrow d="M1 0v8l6-4z" />
        </HScroll>
      </TabsBar>

      <StatusBar>
        Modificar
        <ViewButton $w={40} aria-label="Grabar macro">
          <Icon w={12} h={11}><path d="M6 9.500H.5V.500h11V5M.5 3h11M2.500 5.500h3M2.500 7.500h2" /><circle cx="8.500" cy="7.500" r="3" /><circle cx="8.500" cy="7.500" r="1" fill="#666" /></Icon>
        </ViewButton>
        <Icon w={12} h={12}><circle cx="5" cy="2" r="1.400" /><path d="M1 3.500l3 1.500v2.500L2 11.500l1.500 0L5 8.500M9 3.500L6 5v2M6.500 7l5 4.500M11.500 7l-5 4.500" /></Icon>
        <strong>Accesibilidad: es necesario investigar</strong>
        <StatusRight>
          <ViewButton aria-label="Normal"><Icon w={11} h={11}><path d="M.500.500h10v10H.500zM.500 4h10M.500 7.500h10M4 .5v10M7.500.5v10" /></Icon></ViewButton>
          <ViewButton aria-label="Diseño"><Icon w={11} h={11}><path d="M.500.500h10v10H.500zM3 2.500h5v6H3zM4 4.500h3M4 6.500h3" /></Icon></ViewButton>
          <ViewButton aria-label="Saltos"><Icon w={11} h={11}><path d="M.500.500h10v10H.500zM3.500.500v6h4v-6" /></Icon></ViewButton>
          <ViewButton $w={15} aria-label="Alejar"><Icon w={6} h={6}><path d="M0 3.500h6" /></Icon></ViewButton>
          <Zoom aria-label="Zoom" defaultValue="50" />
          <ViewButton $w={14} aria-label="Acercar"><Icon w={6} h={6}><path d="M0 3.500h6M3 .5v6" /></Icon></ViewButton>
          <ZoomValue>120%</ZoomValue>
        </StatusRight>
      </StatusBar>

      <Taskbar>
        <TaskButton aria-label="Inicio">
          <Icon w={14} h={14} stroke="none" fill="#fff"><path d="M0 2l6-1v5.700H0zM6.700.9L14 0v6.700H6.700zM0 7.400h6V13l-6-1zM6.700 7.400H14V14l-7.300-1z" /></Icon>
        </TaskButton>
        <SearchBox>
          <Lens w={14} flat />
          <input type="text" placeholder="Escribe aquí para buscar" aria-label="Buscar" />
        </SearchBox>
        <TaskButton aria-label="Cortana"><Icon w={12} h={12}><circle cx="6" cy="6" r="5" strokeWidth="1.800" /></Icon></TaskButton>
        <TaskButton aria-label="Vista de tareas"><Icon w={14} h={13}><path d="M.500 0v2.500h9V0M.500 4.500h9v4.500h-9zM.500 13v-2h9v2M12.500 0v3M12.500 6v7M11.500 4.500h2" /></Icon></TaskButton>
        <TaskButton aria-label="Edge">
          <Icon w={21} h={21} stroke="none">
            <defs>
              <linearGradient id="edgeTop" x1="0" y1="0" x2="1" y2="0"><stop stopColor="#1fa0e0" /><stop offset="1" stopColor="#58d860" /></linearGradient>
            </defs>
            <circle cx="10.500" cy="10.500" r="10" fill="#1173c4" />
            <path d="M.5 10C1 4 5 .5 10.500.5s10 4 10 8c0 3-2.500 5-5.500 5-2 0-3-1-2.500-2 .5-2-1-4-3.500-4C5 7 1.500 8 .5 10z" fill="url(#edgeTop)" />
            <path d="M7 11c0 4 4 7 9 6l3-1c-3 5-9 5.500-13 2-3-3-2.500-8 2-10-1 1-1 2-1 3z" fill="#0b4f94" />
            <path d="M9.500 10c0 3 3 5.500 7 5l3-1-1 2-2.500.5c-4 0-7-2.500-6.500-6.500z" fill="#101010" />
          </Icon>
        </TaskButton>
        <TaskButton aria-label="Calculadora">
          <Icon w={15} h={20} stroke="none">
            <path d="M0 0h15v20H0z" fill="#8b97a2" />
            <path d="M2 2h11v4H2z" fill="#5cc0f0" />
            <path d="M2 8h3v2.500H2zM6 8h3v2.500H6zM10 8h3v2.500h-3zM2 11.700h3v2.500H2zM6 11.700h3v2.500H6zM2 15.400h3V18H2zM6 15.400h3V18H6z" fill="#fff" />
            <path d="M10 11.700h3V18h-3z" fill="#1d5a96" />
          </Icon>
        </TaskButton>
        <TaskButton $open aria-label="Explorador">
          <Icon w={19} h={17} stroke="none">
            <path d="M1 1h7l1.500 2H18v13H1z" fill="#e8a92e" />
            <path d="M1 5h17v11H1z" fill="#fbd668" />
            <path d="M4 17V9.500h11.500V17H12v-3.500H7.500V17z" fill="#3c93d2" />
          </Icon>
        </TaskButton>
        <TaskButton $open $active aria-label="Excel">
          <Icon w={20} h={18} stroke="none">
            <path d="M6 0h14v18H6z" fill="#21a366" />
            <path d="M13 0h7v6h-7z" fill="#33c481" />
            <path d="M6 6h7v6H6z" fill="#107c41" />
            <path d="M6 12h14v6H6z" fill="#185c37" />
            <path d="M0 4h10v10H0z" fill="#107c41" />
            <path d="M3 6.500l4 5M7 6.500l-4 5" stroke="#fff" strokeWidth="1.400" />
          </Icon>
        </TaskButton>
        <Tray>
          <Weather>
            <Icon w={20} h={20} stroke="none">
              <path d="M0 11C1 5 13 3 17 9l-4 1-4-.5L4 11z" fill="#58a8ea" />
              <path d="M8.500 9v8c0 2-2.500 2-2.500.500" stroke="#aaa" strokeWidth="1.200" />
              <path d="M9 3l1-2M12 3.500l1-2M15 2l1-2M16 6l1-2M18.500 3.500l1-2" stroke="#58a8ea" strokeWidth="1.300" />
              <circle cx="17" cy="17" r="2.700" fill="#e3173e" />
            </Icon>
            Llueve ahora
          </Weather>
          <TrayButton aria-label="Mostrar iconos"><Icon w={10} h={6}><path d="M.5 5.500L5 1l4.500 4.500" /></Icon></TrayButton>
          <TrayButton aria-label="Reunión"><Icon w={10} h={11}><path d="M2 .5h5M2 10.500h5" /><rect x=".5" y="2.500" width="6.500" height="6" rx="1" /><path d="M7.500 4.500l2-1v4l-2-1z" /></Icon></TrayButton>
          <TrayButton aria-label="OneDrive"><Icon w={13} h={9} stroke="none" fill="#e6e6e6"><path d="M3 9C-.5 9-.5 4.500 2.500 4.500 3 1 7.500-.5 9 3.500c3-.5 5 1.500 4 4-.5 1-1 1.500-2 1.500z" /></Icon></TrayButton>
          <TrayButton aria-label="Batería"><Icon w={13} h={9}><path d="M3.500 2.500h9v6h-9z" fill="#ddd" /><path d="M0 2.500h4M1.500 0v5M3.500 0v3" /></Icon></TrayButton>
          <TrayButton aria-label="Red"><Icon w={13} h={11}><path d="M3 1.500h9.500v6H1.500V4M.5.500h2v3h-2zM7 8v2.500M4 10.500h6" /></Icon></TrayButton>
          <TrayButton aria-label="Volumen"><Icon w={14} h={11}><path d="M.5 3.500h2l3-3v10l-3-3h-2zM7.500 3.500c1 1 1 3 0 4M9.500 2c2 2 2 5 0 7M11.500.5c3 3 3 7 0 10" /></Icon></TrayButton>
          <TrayButton $w={30}>ENG</TrayButton>
          <Clock>07:45 PM<br />09/30/2022</Clock>
          <TrayButton aria-label="Notificaciones">
            <Icon w={14} h={14}><path d="M.500 1h13v10H8l-2 2.500V11H.500z" fill="#fff" /><path d="M3 4h8M3 6.500h6M3 8.500h4" stroke="#333" /><circle cx="11" cy="9" r="2.500" stroke="#333" fill="#fff" /></Icon>
          </TrayButton>
          <ShowDesktop aria-label="Mostrar escritorio" />
        </Tray>
      </Taskbar>

      <Annotations viewBox="0 0 1280 720" fill="none" aria-hidden="true">
        <g stroke="#e0202a" strokeWidth="3">
          <rect x="21.500" y="198" width="59.500" height="449" />
          <rect x="405.500" y="196.500" width="59.500" height="453" />
          <rect x="659.500" y="198.500" width="422" height="357.500" />
          <path d="M369 141C450 116 520 100 580 100C660 100 720 132 824 175" strokeLinecap="round" />
          <path d="M819 157L826 175L810 179" strokeLinecap="round" strokeLinejoin="round" />
        </g>
        <g stroke="#05054f" strokeWidth="3">
          <path d="M70 191C130 150 185 104 247 104C310 104 370 150 426 189" />
          <path d="M69.500 177V191.500L82 192M425 169L426 189.500H408" />
        </g>
        <path d="M555.700 450L600.700 496.700L617.700 479L628 555L553 543L570.700 527L525 482Z" fill="#ed1c24" stroke="#000" strokeWidth="3" />
      </Annotations>
    </Page>
  );
}
